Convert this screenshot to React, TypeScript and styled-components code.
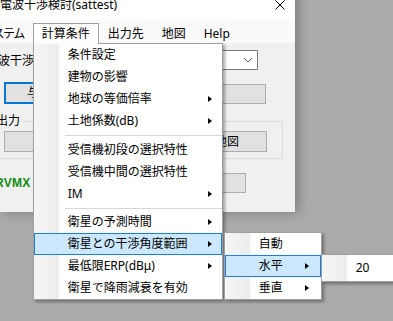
import React from 'react';
import styled, { createGlobalStyle } from 'styled-components';

const GlobalStyle = createGlobalStyle`
  html, body {
    margin: 0;
    padding: 0;
  }
  body {
    background: #ababab;
    font-family: "Noto Sans", "Noto Sans CJK JP", sans-serif;
    font-size: 12px;
    color: #000;
  }
`;

const Desktop = styled.div`
  position: relative;
  width: 393px;
  height: 321px;
  overflow: hidden;
  background: #ababab;
`;

const Window = styled.div`
  width: 295px;
  margin-top: -10px;
  background: #f0f0f0;
  box-shadow: 3px 0 12px rgba(0, 0, 0, 0.3);
`;

const TitleBar = styled.div`
  height: 30px;
  background: #fff;
  display: flex;
  align-items: center;
  justify-content: space-between;
  padding-right: 10px;
  box-sizing: border-box;
`;

const Title = styled.span`
  line-height: 14px;
  white-space: nowrap;
`;

const MenuBar = styled.div`
  height: 23px;
  background: #fafafa;
  display: flex;
  align-items: flex-end;
`;

const BarItem = styled.div<{ $open?: boolean; $shift?: number; $tight?: boolean }>`
  position: relative;
  height: 20px;
  line-height: 19px;
  padding: 0 8px;
  margin-left: ${p => p.$shift ?? 0}px;
  letter-spacing: ${p => (p.$tight ? '-1.5px' : 'normal')};
  box-sizing: border-box;
  white-space: nowrap;
  border: 1px solid ${p => (p.$open ? '#a0a0a0' : 'transparent')};
  border-bottom: none;
  background: ${p => (p.$open ? '#fff' : 'transparent')};

  /* open item merges into its dropdown */
  ${p =>
    p.$open &&
    `&::after {
      content: '';
      position: absolute;
      left: 0;
      right: 0;
      bottom: -1px;
      height: 1px;
      background: #fff;
      z-index: 11;
    }`}
`;

const Menu = styled.div<{ $left: number; $top: number; $width: number; $pad?: number }>`
  position: absolute;
  left: ${p => p.$left}px;
  top: ${p => p.$top}px;
  width: ${p => p.$width}px;
  padding: ${p => p.$pad ?? 0}px 0;
  background: #fff linear-gradient(to right, #f6f6f6 0, #ececec 24px, #fdfdfd 26px, #fff 28px) no-repeat;
  background-size: 28px 100%;
  border: 1px solid #a0a0a0;
  box-shadow: 2px 2px 3px rgba(0, 0, 0, 0.35);
  box-sizing: border-box;
  z-index: 10;
  line-height: 20px;
  letter-spacing: normal;
`;

const MenuItem = styled.div<{ $active?: boolean; $arrowPad?: number }>`
  position: relative;
  height: 22px;
  display: flex;
  align-items: center;
  justify-content: space-between;
  padding: 0 ${p => p.$arrowPad ?? 9}px 0 33px;
  box-sizing: border-box;
  white-space: nowrap;
  border: 1px solid ${p => (p.$active ? '#1e7fd9' : 'transparent')};
  background: ${p => (p.$active ? '#cce8ff' : 'transparent')};
`;

const Arrow = styled.span`
  width: 0;
  height: 0;
  border-left: 4px solid #000;
  border-top: 3.5px solid transparent;
  border-bottom: 3.5px solid transparent;
`;

const Separator = styled.div<{ $h: number }>`
  height: ${p => p.$h}px;
  display: flex;
  align-items: center;
  padding-left: 31px;

  &::before {
    content: '';
    flex: 1;
    height: 1px;
    background: #d7d7d7;
  }
`;

const Body = styled.div`
  height: 169px;
  padding-top: 7px;
  box-sizing: border-box;
  display: flex;
  flex-direction: column;
  overflow: hidden;
`;

const Row = styled.div<{ $gap?: number; $h: number }>`
  display: flex;
  justify-content: space-between;
  align-items: flex-end;
  height: ${p => p.$h}px;
  margin-top: ${p => p.$gap ?? 0}px;
`;

const FieldLabel = styled.span<{ $shift: number }>`
  margin-left: ${p => p.$shift}px;
  align-self: center;
  white-space: nowrap;
`;

const Combo = styled.div<{ $right: number }>`
  width: 118px;
  height: 20px;
  margin-right: ${p => p.$right}px;
  background: #fff;
  border: 1px solid #7a7a7a;
  box-sizing: border-box;
  display: flex;
  align-items: center;
  justify-content: flex-end;
  padding-right: 3px;
`;

const Button = styled.div<{
  $w: number;
  $h: number;
  $left?: number;
  $right?: number;
  $focus?: boolean;
  $align?: 'flex-start' | 'center' | 'flex-end';
  $inset?: number;
}>`
  width: ${p => p.$w}px;
  height: ${p => p.$h}px;
  flex: none;
  margin-left: ${p => p.$left ?? 0}px;
  margin-right: ${p => p.$right ?? 0}px;
  padding: 0 ${p => p.$inset ?? 0}px;
  background: #e1e1e1;
  border: ${p => (p.$focus ? '2px solid #0078d7' : '1px solid #adadad')};
  box-sizing: border-box;
  display: flex;
  align-items: center;
  justify-content: ${p => p.$align ?? 'center'};
  white-space: nowrap;
  overflow: hidden;
  line-height: 14px;
`;

const Group = styled.fieldset`
  margin: 10px 0 0 -8px;
  width: 291px;
  min-width: 0;
  padding: 3px 15px 6px 11px;
  border: 1px solid #dcdcdc;
  box-sizing: border-box;
  display: flex;
  justify-content: space-between;
`;

const GroupTitle = styled.legend`
  margin-left: -10px;
  padding: 0 2px;
  line-height: 14px;
`;

const GreenTag = styled.span`
  margin-left: -5px;
  align-self: center;
  font-family: "Liberation Sans", sans-serif;
  font-weight: bold;
  font-size: 12px;
  color: #128a12;
  letter-spacing: 0.3px;
`;

const CloseGlyph = () => (
  <svg width="10" height="10" viewBox="0 0 10 10">
    <path d="M0.5 0.5 L9.5 9.5 M9.5 0.5 L0.5 9.5" stroke="#000" strokeWidth="1" />
  </svg>
);

const Chevron = () => (
  <svg width="12" height="8" viewBox="0 0 12 8">
    <polyline points="2,2 6,6 10,2" fill="none" stroke="#5a5a5a" strokeWidth="1" />
  </svg>
);

const App: React.FC = () => {
  return (
    <Desktop>
      <GlobalStyle />
      <Window>
        <TitleBar>
          <Title>電波干渉検討(sattest)</Title>
          <CloseGlyph />
        </TitleBar>
        <MenuBar>
          <BarItem $shift={-27} $tight>
            システム
          </BarItem>
          <BarItem $open>
            計算条件
            <Menu $left={-1} $top={19} $width={190}>
              <MenuItem>条件設定</MenuItem>
              <MenuItem>建物の影響</MenuItem>
              <MenuItem>
                地球の等価倍率<Arrow />
              </MenuItem>
              <MenuItem>
                土地係数(dB)<Arrow />
              </MenuItem>
              <Separator $h={7} />
              <MenuItem>受信機初段の選択特性</MenuItem>
              <MenuItem>受信機中間の選択特性</MenuItem>
              <MenuItem>
                IM<Arrow />
              </MenuItem>
              <Separator $h={6} />
              <MenuItem>
                衛星の予測時間<Arrow />
              </MenuItem>
              <MenuItem $active>
                衛星との干渉角度範囲<Arrow />
                <Menu $left={189} $top={-2} $width={98}>
                  <MenuItem $arrowPad={11}>自動</MenuItem>
                  <MenuItem $active $arrowPad={11}>
                    水平<Arrow />
                    <Menu $left={95} $top={-2} $width={100} $pad={2}>
                      <MenuItem>20</MenuItem>
                    </Menu>
                  </MenuItem>
                  <MenuItem $arrowPad={11}>
                    垂直<Arrow />
                  </MenuItem>
                </Menu>
              </MenuItem>
              <MenuItem>
                最低限ERP(dBμ)<Arrow />
              </MenuItem>
              <MenuItem>衛星で降雨減衰を有効</MenuItem>
            </Menu>
          </BarItem>
          <BarItem>出力先</BarItem>
          <BarItem>地図</BarItem>
          <BarItem>Help</BarItem>
        </MenuBar>
        <Body>
          <Row $h={20}>
            <FieldLabel $shift={-14}>電波干渉</FieldLabel>
            <Combo $right={37}>
              <Chevron />
            </Combo>
          </Row>
          <Row $h={22} $gap={12}>
            <Button $w={96} $h={22} $left={4} $focus $align="flex-start" $inset={21}>
              与干渉
            </Button>
            <Button $w={100} $h={20} $right={29} />
          </Row>
          <Group>
            <GroupTitle>出力</GroupTitle>
            <Button $w={96} $h={21} />
            <Button $w={80} $h={21} $align="flex-end" $inset={27}>
              地図
            </Button>
          </Group>
          <Row $h={20} $gap={14}>
            <GreenTag>RVMX</GreenTag>
            <Button $w={66} $h={20} $right={49} />
          </Row>
        </Body>
      </Window>
    </Desktop>
  );
};

export default App;
